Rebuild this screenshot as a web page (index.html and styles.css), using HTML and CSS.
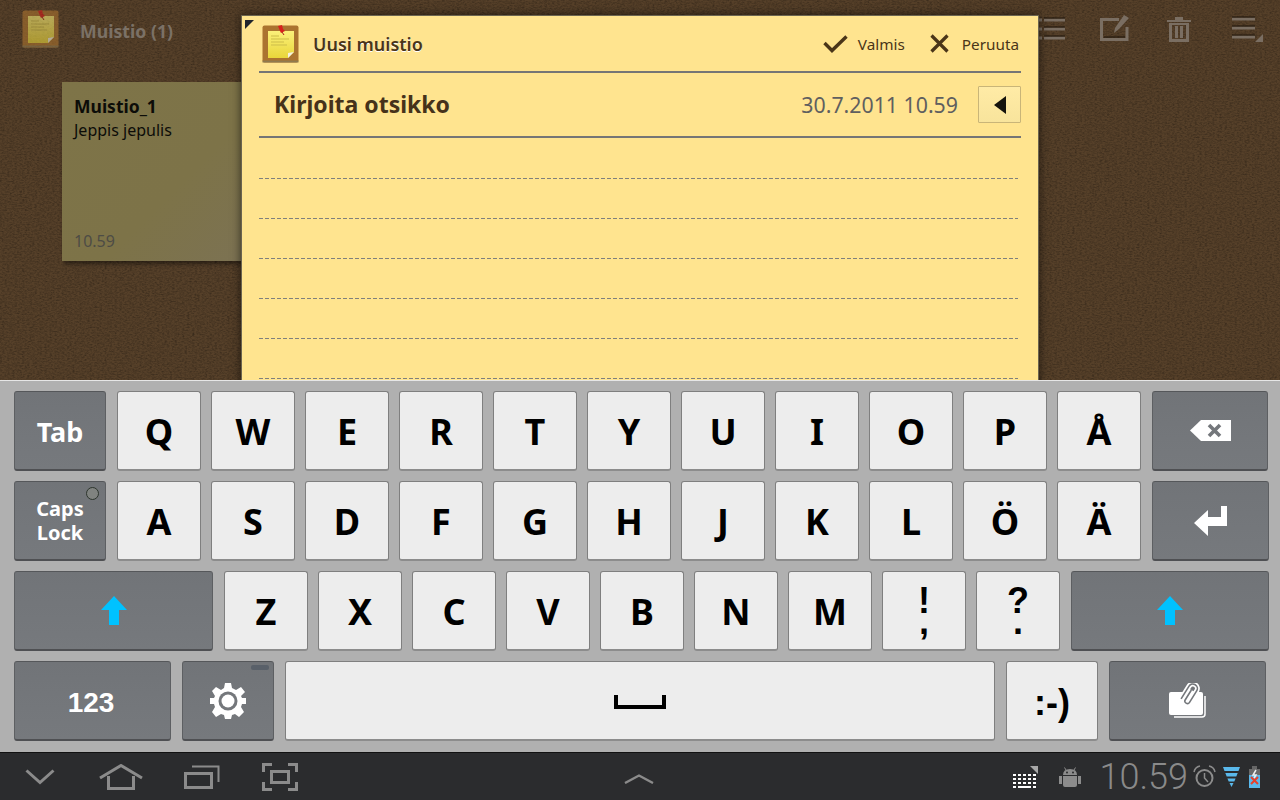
FILE: index.html
```html
<!DOCTYPE html>
<html lang="fi">

<head>
    <meta charset="UTF-8">
    <meta name="viewport" content="width=device-width, initial-scale=1.0">
    <title>Muistio</title>
    <link rel="stylesheet" href="styles.css">
</head>

<body>
    <svg class="defs" width="0" height="0" aria-hidden="true">
        <defs>
            <filter id="grain" x="0" y="0" width="100%" height="100%">
                <feTurbulence type="fractalNoise" baseFrequency="0.4 0.7" numOctaves="3" seed="7" />
                <feColorMatrix type="matrix" values="0 0 0 0 0  0 0 0 0 0  0 0 0 0 0  0.4 0.4 0 0 -0.32" />
            </filter>
            <linearGradient id="paper" x1="0" y1="0" x2="0" y2="1">
                <stop offset="0" stop-color="#fbf07a" />
                <stop offset="1" stop-color="#e9d63a" />
            </linearGradient>
            <symbol id="note-icon" viewBox="0 0 37 38">
                <rect x="0.5" y="0.5" width="36" height="37" rx="2" fill="#ab732f" />
                <rect x="0.5" y="35.5" width="36" height="2" fill="#8f7a4f" />
                <path d="M6 6H32V27L26 33H6Z" fill="url(#paper)" />
                <path d="M26 33L32 27L26 28Z" fill="#f4f1df" />
                <path d="M9 11H17M9 14H27M9 17H22M9 20H25" stroke="#cdbd4a" stroke-width="1" />
                <path d="M16 1L20 0L21 4L23 6L19 8L18 6Z" fill="#d8201c" />
                <path d="M20 7L22 10" stroke="#a8201c" stroke-width="1" />
            </symbol>
        </defs>
    </svg>

    <div class="screen">
        <div class="board">
            <svg class="board-grain" aria-hidden="true">
                <rect width="100%" height="100%" filter="url(#grain)" />
            </svg>

            <div class="topbar">
                <svg class="app-icon dimmed" width="37" height="38"><use href="#note-icon" /></svg>
                <span class="app-title">Muistio (1)</span>
                <div class="topbar-actions">
                    <svg class="top-icon" width="26" height="24" viewBox="0 0 26 24">
                        <path d="M0 3H3M5 3H26M0 12H3M5 12H26M0 21H3M5 21H26" stroke="#7a6e62" stroke-width="3" />
                        <path d="M5 1H26M5 10H26M5 19H26" stroke="#1e140a" stroke-width="1" />
                    </svg>
                    <svg class="top-icon top-edit" width="30" height="27" viewBox="0 0 30 27">
                        <path d="M19 5.5H1.5V25.5H27V13" fill="none" stroke="#7a6e62" stroke-width="3" />
                        <path d="M4 23H25" stroke="#1e140a" stroke-width="1" />
                        <path d="M15 14L24 1L29 4L19 15L14 19Z" fill="#7a6e62" />
                    </svg>
                    <svg class="top-icon top-trash" width="24" height="26" viewBox="0 0 24 26">
                        <path d="M0 4H24V6H0ZM8 1H16V4H8Z" fill="#7a6e62" />
                        <path d="M2 7H22V26H2ZM5 9V23H19V9Z" fill="#7a6e62" fill-rule="evenodd" />
                        <path d="M8 10H11V22H8ZM13 10H16V22H13Z" fill="#7a6e62" />
                    </svg>
                    <svg class="top-icon top-menu" width="31" height="26" viewBox="0 0 31 26">
                        <path d="M0 3H23M0 12H23M0 21H23" stroke="#7a6e62" stroke-width="3" />
                        <path d="M0 1H23M0 10H23M0 19H23" stroke="#1e140a" stroke-width="1" />
                        <path d="M31 18V26H23Z" fill="#7a6e62" />
                    </svg>
                </div>
            </div>

            <div class="note-card">
                <div class="note-card-title">Muistio_1</div>
                <div class="note-card-text">Jeppis jepulis</div>
                <div class="note-card-time">10.59</div>
            </div>

            <div class="memo">
                <span class="memo-corner"></span>
                <div class="memo-head">
                    <svg class="app-icon" width="37" height="38"><use href="#note-icon" /></svg>
                    <span class="memo-title">Uusi muistio</span>
                    <span class="memo-action">
                        <svg width="25" height="18" viewBox="0 0 25 18">
                            <path d="M1.5 8L9 15.5L23.5 1.5" fill="none" stroke="#4a3518" stroke-width="3.4" />
                        </svg>
                        Valmis
                    </span>
                    <span class="memo-action">
                        <svg width="19" height="19" viewBox="0 0 19 19">
                            <path d="M1.5 1.5L17.5 17.5M17.5 1.5L1.5 17.5" stroke="#4a3518" stroke-width="3.2" />
                        </svg>
                        Peruuta
                    </span>
                </div>
                <div class="memo-subject">
                    <span class="memo-subject-text">Kirjoita otsikko</span>
                    <span class="memo-date">30.7.2011 10.59</span>
                    <button type="button" class="memo-toggle"><span class="memo-toggle-arrow"></span></button>
                </div>
                <div class="memo-lines">
                    <div class="memo-line"></div>
                    <div class="memo-line"></div>
                    <div class="memo-line"></div>
                    <div class="memo-line"></div>
                    <div class="memo-line"></div>
                    <div class="memo-line"></div>
                </div>
            </div>
        </div>

        <div class="keyboard">
            <div class="key-row">
                <div class="key dark tab">Tab</div>
                <div class="key">Q</div>
                <div class="key">W</div>
                <div class="key">E</div>
                <div class="key">R</div>
                <div class="key">T</div>
                <div class="key">Y</div>
                <div class="key">U</div>
                <div class="key">I</div>
                <div class="key">O</div>
                <div class="key">P</div>
                <div class="key">Å</div>
                <div class="key dark backspace">
                    <svg width="41" height="21" viewBox="0 0 41 21">
                        <path d="M0 10.5L11 0H41V21H11Z" fill="#fff" />
                        <path d="M19 5L30 16M30 5L19 16" stroke="#74777b" stroke-width="3.6" />
                    </svg>
                </div>
            </div>
            <div class="key-row">
                <div class="key dark caps">Caps<br>Lock<span class="caps-led"></span></div>
                <div class="key">A</div>
                <div class="key">S</div>
                <div class="key">D</div>
                <div class="key">F</div>
                <div class="key">G</div>
                <div class="key">H</div>
                <div class="key">J</div>
                <div class="key">K</div>
                <div class="key">L</div>
                <div class="key">Ö</div>
                <div class="key">Ä</div>
                <div class="key dark enter">
                    <svg width="34" height="30" viewBox="0 0 34 30">
                        <path d="M0 17L14 4V11H27V0H33V20H14V30Z" fill="#fff" />
                    </svg>
                </div>
            </div>
            <div class="key-row">
                <div class="key dark shift-left">
                    <svg width="26" height="29" viewBox="0 0 26 29">
                        <path d="M13 0L26 14H18V29H8V14H0Z" fill="#00c2ff" />
                    </svg>
                </div>
                <div class="key">Z</div>
                <div class="key">X</div>
                <div class="key">C</div>
                <div class="key">V</div>
                <div class="key">B</div>
                <div class="key">N</div>
                <div class="key">M</div>
                <div class="key stacked">!<br>,</div>
                <div class="key stacked">?<br>.</div>
                <div class="key dark shift-right">
                    <svg width="26" height="29" viewBox="0 0 26 29">
                        <path d="M13 0L26 14H18V29H8V14H0Z" fill="#00c2ff" />
                    </svg>
                </div>
            </div>
            <div class="key-row spread">
                <div class="key dark numbers">123</div>
                <div class="key dark settings">
                    <svg width="36" height="36" viewBox="0 0 36 36">
                        <path
                            d="M15 0H21L22 5L26 7L31 4L35 9L31 13L32 15H36V21H32L31 24L34 29L29 34L25 31L22 32L21 36H15L14 32L11 31L6 34L2 29L5 24L4 21H0V15H4L5 13L2 8L6 4L11 7L14 5Z"
                            fill="#fff" />
                        <circle cx="18" cy="18" r="9.5" fill="#74777b" />
                        <circle cx="18" cy="18" r="6.5" fill="#fff" />
                    </svg>
                    <span class="settings-mark"></span>
                </div>
                <div class="key space">
                    <svg width="52" height="14" viewBox="0 0 52 14">
                        <path d="M2 0V12H50V0" fill="none" stroke="#000" stroke-width="4" />
                    </svg>
                </div>
                <div class="key smiley">:-)</div>
                <div class="key dark attach">
                    <svg width="38" height="36" viewBox="0 0 38 36">
                        <path d="M36 13V31Q36 34 33 34H5" fill="none" stroke="#fff" stroke-width="1.5" />
                        <rect x="0" y="9" width="34" height="23" rx="2" fill="#fff" />
                        <g transform="rotate(32 21 12)" fill="none">
                            <path d="M19.5 7V18.5A2.5 2.5 0 0 0 24.5 18.5V5A4.5 4.5 0 0 0 15.5 5V20" stroke="#fff"
                                stroke-width="5" />
                            <path d="M19.5 7V18.5A2.5 2.5 0 0 0 24.5 18.5V5A4.5 4.5 0 0 0 15.5 5V20" stroke="#74777b"
                                stroke-width="1.6" />
                        </g>
                    </svg>
                </div>
            </div>
        </div>

        <div class="sysbar">
            <div class="sys-nav">
                <svg width="30" height="16" viewBox="0 0 30 16">
                    <path d="M1.5 1.5L15 13.5L28.5 1.5" fill="none" stroke="#8b8b8b" stroke-width="3" />
                </svg>
                <svg class="nav-home" width="44" height="26" viewBox="0 0 44 26">
                    <path d="M1 14L22 1.5L43 14" fill="none" stroke="#8b8b8b" stroke-width="3" />
                    <path d="M9.5 12V24.5H34.5V12" fill="none" stroke="#8b8b8b" stroke-width="3" />
                </svg>
                <svg class="nav-recent" width="36" height="24" viewBox="0 0 36 24">
                    <path d="M8 1.5H34.5V17" fill="none" stroke="#8b8b8b" stroke-width="2" />
                    <rect x="1.5" y="8.5" width="26" height="14" fill="none" stroke="#8b8b8b" stroke-width="3" />
                </svg>
                <svg width="36" height="28" viewBox="0 0 36 28">
                    <path d="M1.5 9V1.5H10M26 1.5H34.5V9M34.5 19V26.5H26M10 26.5H1.5V19" fill="none"
                        stroke="#8b8b8b" stroke-width="3" />
                    <rect x="9.5" y="8.5" width="17" height="11" fill="none" stroke="#8b8b8b" stroke-width="3" />
                </svg>
            </div>
            <svg class="sys-handle" width="30" height="10" viewBox="0 0 30 10">
                <path d="M1 9L15 1.5L29 9" fill="none" stroke="#8b8b8b" stroke-width="2.4" />
            </svg>
            <div class="sys-status">
                <svg class="sys-keys" width="26" height="22" viewBox="0 0 26 22">
                    <path d="M18 0H26V8Z" fill="#a8a8a8" />
                    <path d="M1 8H4V10H1ZM6 8H9V10H6ZM11 8H14V10H11ZM16 8H19V10H16ZM21 8H24V10H21ZM1 12H4V14H1ZM6 12H9V14H6ZM11 12H14V14H11ZM16 12H19V14H16ZM21 12H24V14H21ZM1 16H4V18H1ZM6 16H9V18H6ZM11 16H14V18H11ZM16 16H19V18H16ZM21 16H24V18H21ZM1 20H4V22H1ZM6 20H19V22H6ZM21 20H24V22H21Z"
                        fill="#fff" />
                </svg>
                <svg class="sys-android" width="22" height="22" viewBox="0 0 22 22">
                    <path d="M4 9Q4 3 11 3Q18 3 18 9ZM4 10H18V19Q18 21 16 21H6Q4 21 4 19Z" fill="#8c8c8c" />
                    <path d="M7 4L5.5 1.5M15 4L16.5 1.5" stroke="#8c8c8c" stroke-width="1" />
                    <circle cx="8" cy="6.5" r="1" fill="#2b2c2e" />
                    <circle cx="14" cy="6.5" r="1" fill="#2b2c2e" />
                    <rect x="0" y="10" width="3" height="8" fill="#8c8c8c" />
                    <rect x="19" y="10" width="3" height="8" fill="#8c8c8c" />
                </svg>
                <span class="sys-clock">10.59</span>
                <svg class="sys-alarm" width="23" height="24" viewBox="0 0 23 24">
                    <circle cx="11.5" cy="13" r="8" fill="none" stroke="#8c8c8c" stroke-width="2" />
                    <path d="M11.5 8V13L15 17" fill="none" stroke="#8c8c8c" stroke-width="1.5" />
                    <path d="M1 7Q2 2 7 1M16 1Q21 2 22 7" fill="none" stroke="#8c8c8c" stroke-width="1.5" />
                </svg>
                <svg class="sys-wifi" width="17" height="20" viewBox="0 0 17 20">
                    <path d="M0 0H17L15.5 4H1.5ZM2.3 6H14.7L13.3 9.5H3.7ZM4.4 11.5H12.6L11.3 14.5H5.7ZM6.5 16H10.5L8.5 20Z"
                        fill="#5ab9ec" />
                </svg>
                <svg class="sys-battery" width="11" height="22" viewBox="0 0 11 22">
                    <path d="M3 0H8V3H3Z" fill="#666" />
                    <rect x="0" y="3" width="11" height="6" fill="#6a6a6a" />
                    <rect x="0" y="9" width="11" height="13" fill="#5ab9ec" />
                    <path d="M7 4L4 9H7L5 12" fill="none" stroke="#eee" stroke-width="1.5" />
                    <path d="M2 11L9 18M9 11L2 18" stroke="#e8402a" stroke-width="2" />
                </svg>
            </div>
        </div>
    </div>
</body>

</html>
```

FILE: styles.css
```css
html,
body {
    margin: 0;
    padding: 0;
    background-color: #2b2c2e;
}

body {
    font-family: "Noto Sans", "Open Sans", sans-serif;
}

.defs {
    display: block;
    height: 0;
}

.screen {
    width: 1280px;
    height: 800px;
    display: flex;
    flex-direction: column;
    overflow: hidden;
}

/* Notes board */
.board {
    position: relative;
    height: 380px;
    flex: none;
    background-color: #564029;
    overflow: hidden;
}

.board-grain {
    position: absolute;
    top: 0;
    left: 0;
    width: 100%;
    height: 100%;
}

.topbar {
    position: relative;
    display: flex;
    align-items: center;
    height: 36px;
    padding: 11px 17px 0 22px;
}

.app-icon {
    flex: none;
    display: block;
}

.dimmed {
    opacity: 0.6;
}

.app-title {
    margin-left: 21px;
    padding-top: 3px;
    font-size: 17.7px;
    font-weight: 700;
    color: #7b7166;
}

.topbar-actions {
    margin-left: auto;
    display: flex;
    align-items: center;
}

.top-icon {
    display: block;
}

.top-edit {
    margin-left: 35px;
    margin-bottom: 3px;
}

.top-trash {
    margin-left: 37px;
}

.top-menu {
    margin-left: 41px;
}

.note-card {
    position: relative;
    width: 187px;
    height: 179px;
    box-sizing: border-box;
    margin: 35px 0 0 62px;
    padding: 13px 12px 9px;
    display: flex;
    flex-direction: column;
    background: linear-gradient(135deg, #7e7448 0%, #7d7348 60%, #7c7253 100%);
    box-shadow: 2px 3px 4px rgba(0, 0, 0, 0.45);
    color: #0c0c08;
}

.note-card-title {
    font-size: 17.5px;
    font-weight: 700;
    line-height: 23px;
}

.note-card-text {
    font-size: 16px;
    line-height: 24px;
}

.note-card-time {
    margin-top: auto;
    font-size: 16px;
    color: #4d4c45;
}

/* Memo dialog, over the board */
.memo {
    position: absolute;
    top: 15px;
    left: 241px;
    width: 798px;
    height: 380px;
    box-sizing: border-box;
    padding: 0 17px;
    background-color: #ffe48f;
    border: 1px solid #6b6450;
    border-bottom: none;
    box-shadow: 0 0 9px rgba(0, 0, 0, 0.6);
}

.memo-corner {
    position: absolute;
    top: 4px;
    left: 3px;
    border-top: 9px solid #20242c;
    border-right: 9px solid transparent;
}

.memo-head {
    display: flex;
    align-items: center;
    height: 55px;
    border-bottom: 2px solid #757575;
    padding-left: 3px;
}

.memo-title {
    margin-left: 14px;
    font-size: 18px;
    font-weight: 600;
    color: #4a3518;
    text-shadow: 0 1px 0 #fff;
    margin-right: auto;
}

.memo-action {
    display: flex;
    align-items: center;
    gap: 10px;
    font-size: 15.3px;
    color: #4a3518;
}

.memo-action+.memo-action {
    gap: 13px;
    margin-left: 25px;
    margin-right: 2px;
}

.memo-subject {
    display: flex;
    align-items: center;
    height: 63px;
    border-bottom: 2px solid #757575;
    padding-left: 15px;
}

.memo-subject-text {
    font-size: 23px;
    font-weight: 700;
    color: #46321a;
    margin-right: auto;
    padding-bottom: 2px;
}

.memo-date {
    font-size: 21.3px;
    color: #5f5f5f;
}

.memo-toggle {
    width: 43px;
    height: 37px;
    margin-left: 20px;
    padding: 0;
    display: flex;
    align-items: center;
    justify-content: center;
    background: linear-gradient(#ffeba6, #f8e49c);
    border: 1px solid #c9b578;
    border-radius: 1px;
}

.memo-toggle-arrow {
    border-top: 9px solid transparent;
    border-bottom: 9px solid transparent;
    border-right: 12px solid #15130c;
}

.memo-lines {
    width: 759px;
    padding-top: 2px;
}

.memo-line {
    height: 39px;
    border-bottom: 1px solid transparent;
    background: repeating-linear-gradient(90deg, #80807c 0, #80807c 4px, transparent 4px, transparent 6px) bottom / 100% 1px no-repeat;
}

/* Keyboard */
.keyboard {
    height: 361px;
    flex: none;
    padding-top: 10px;
    background-color: #b0b0b0;
    border-top: 1px solid #e6e6e6;
    display: flex;
    flex-direction: column;
    gap: 10px;
}

.key-row {
    display: flex;
    gap: 10px;
    height: 80px;
    padding-left: 14px;
}

.key-row.spread {
    gap: 11px;
}

.key {
    width: 84px;
    box-sizing: border-box;
    display: flex;
    align-items: center;
    justify-content: center;
    flex: none;
    padding-top: 2px;
    text-align: center;
    background-color: #ededed;
    border: 1px solid #7f7f7f;
    border-bottom: 2px solid #8c8c8c;
    border-radius: 3px;
    font-size: 36px;
    font-weight: 700;
    color: #000;
}

.key.dark {
    position: relative;
    padding-top: 0;
    background: linear-gradient(#717478, #76797d);
    border: 1px solid #5d5f62;
    border-top-color: #55575a;
    border-bottom: 2px solid #4f5053;
    color: #fff;
}

.key.tab {
    width: 92px;
    margin-right: 1px;
    padding-top: 1px;
    font-size: 27px;
}

.key.caps {
    width: 92px;
    margin-right: 1px;
    display: block;
    padding-top: 15px;
    font-size: 20px;
    line-height: 24px;
}

.caps-led {
    position: absolute;
    top: 5px;
    right: 6px;
    width: 13px;
    height: 13px;
    box-sizing: border-box;
    border-radius: 50%;
    background-color: #808380;
    border: 1px solid #2d352d;
}

.backspace {
    width: 116px;
    margin-left: 1px;
}

.enter {
    width: 117px;
    margin-left: 1px;
}

.shift-left {
    width: 199px;
    margin-right: 1px;
}

.shift-right {
    width: 198px;
    margin-left: 1px;
}

.key.numbers {
    width: 157px;
    padding-top: 4px;
    padding-right: 3px;
    font-family: "Liberation Sans", sans-serif;
    font-size: 28px;
}

.settings {
    width: 92px;
}

.settings-mark {
    position: absolute;
    top: 3px;
    right: 4px;
    width: 18px;
    height: 5px;
    border-radius: 2px;
    background-color: #596069;
}

.key.space {
    width: 710px;
    padding-top: 3px;
}

.key.smiley {
    width: 92px;
    padding-top: 5px;
    font-family: "Liberation Sans", sans-serif;
    font-size: 36px;
}

.attach {
    width: 157px;
}

.key.stacked {
    display: block;
    padding-top: 18px;
    font-family: "Liberation Sans", sans-serif;
    font-size: 36px;
    line-height: 21px;
}

/* System bar */
.sysbar {
    position: relative;
    flex: 1;
    display: flex;
    align-items: center;
    justify-content: space-between;
    background-color: #2b2c2e;
    border-top: 1px solid #111;
}

.sys-nav {
    display: flex;
    align-items: center;
    gap: 42px;
    padding-left: 25px;
}

.nav-home {
    margin-left: 2px;
}

.nav-recent {
    margin-left: -1px;
}

.sys-handle {
    position: absolute;
    left: 624px;
    top: 21px;
}

.sys-status {
    display: flex;
    align-items: center;
    padding-right: 20px;
}

.sys-android {
    margin-left: 21px;
}

.sys-clock {
    margin-left: 19px;
    font-family: "Roboto", "Liberation Sans", sans-serif;
    font-weight: 300;
    font-size: 36px;
    line-height: 46px;
    color: #8a8a8a;
}

.sys-alarm {
    margin-left: 5px;
}

.sys-wifi {
    margin-left: 7px;
}

.sys-battery {
    margin-left: 9px;
}
```
